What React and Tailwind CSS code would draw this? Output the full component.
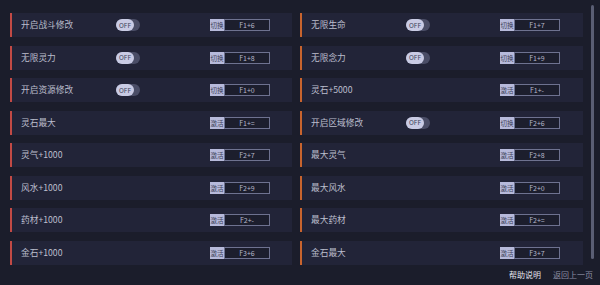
import React from 'react';

const leftRows = [
  { label: '开启战斗修改', type: 'toggle', key: 'F1+6' },
  { label: '无限灵力', type: 'toggle', key: 'F1+8' },
  { label: '开启资源修改', type: 'toggle', key: 'F1+0' },
  { label: '灵石最大', type: 'btn', key: 'F1+=' },
  { label: '灵气+1000', type: 'btn', key: 'F2+7' },
  { label: '风水+1000', type: 'btn', key: 'F2+9' },
  { label: '药材+1000', type: 'btn', key: 'F2+-' },
  { label: '金石+1000', type: 'btn', key: 'F3+6' },
];

const rightRows = [
  { label: '无限生命', type: 'toggle', key: 'F1+7' },
  { label: '无限念力', type: 'toggle', key: 'F1+9' },
  { label: '灵石+5000', type: 'btn', key: 'F1+-' },
  { label: '开启区域修改', type: 'toggle', key: 'F2+6' },
  { label: '最大灵气', type: 'btn', key: 'F2+8' },
  { label: '最大风水', type: 'btn', key: 'F2+0' },
  { label: '最大药材', type: 'btn', key: 'F2+=' },
  { label: '金石最大', type: 'btn', key: 'F3+7' },
];

function Toggle() {
  return (
    <div className="w-[24px] h-[12px] rounded-full bg-[#4a4d66] flex items-center">
      <div className="w-[18px] h-[12px] rounded-full bg-[#c9cbe4] flex items-center justify-center text-[6.5px] leading-none text-[#3c3f58]">
        OFF
      </div>
    </div>
  );
}

function Hotkey({ type, value }) {
  return (
    <div className="flex h-[12px] w-[60px] items-stretch">
      <div className="w-[14px] bg-[#b7badb] text-[#3a3d56] text-[6.5px] leading-[12px] text-center">
        {type === 'toggle' ? '切换' : '激活'}
      </div>
      <div className="flex-1 border border-[#6e7290] bg-[#1c1e2d] text-[7px] leading-[10px] text-center text-[#b4b6c8]">
        {value}
      </div>
    </div>
  );
}

function Row({ row, accent }) {
  return (
    <div className={`h-[24px] flex items-center bg-[#222438] border-l-2 ${accent}`}>
      <div className="w-[104px] pl-[9px] text-[8.7px] text-[#bcbecd] whitespace-nowrap">{row.label}</div>
      <div className="w-[94px]">{row.type === 'toggle' && <Toggle />}</div>
      <Hotkey type={row.type} value={row.key} />
    </div>
  );
}

export default function App() {
  return (
    <div
      className="w-[600px] h-[285px] bg-[#1b1d2b] relative overflow-hidden"
      style={{ fontFamily: '"Noto Sans CJK SC", "Noto Sans", sans-serif' }}
    >
      <div className="flex pt-[13px] pl-[10px]">
        <div className="w-[282px] flex flex-col gap-[8.5px]">
          {leftRows.map((r) => (
            <Row key={r.label} row={r} accent="border-[#c24a45]" />
          ))}
        </div>
        <div className="w-[283px] ml-[8px] flex flex-col gap-[8.5px]">
          {rightRows.map((r) => (
            <Row key={r.label} row={r} accent="border-[#c8642e]" />
          ))}
        </div>
      </div>

      {/* scrollbar */}
      <div className="absolute left-[591px] top-[5px] w-[3px] h-[254px] rounded-full bg-[#5a5e74]" />

      <div className="absolute right-[7px] bottom-[4px] flex gap-[12px] text-[8px]">
        <span className="text-[#e4e5ee]">帮助说明</span>
        <span className="text-[#8b8ea3]">返回上一页</span>
      </div>
    </div>
  );
}
